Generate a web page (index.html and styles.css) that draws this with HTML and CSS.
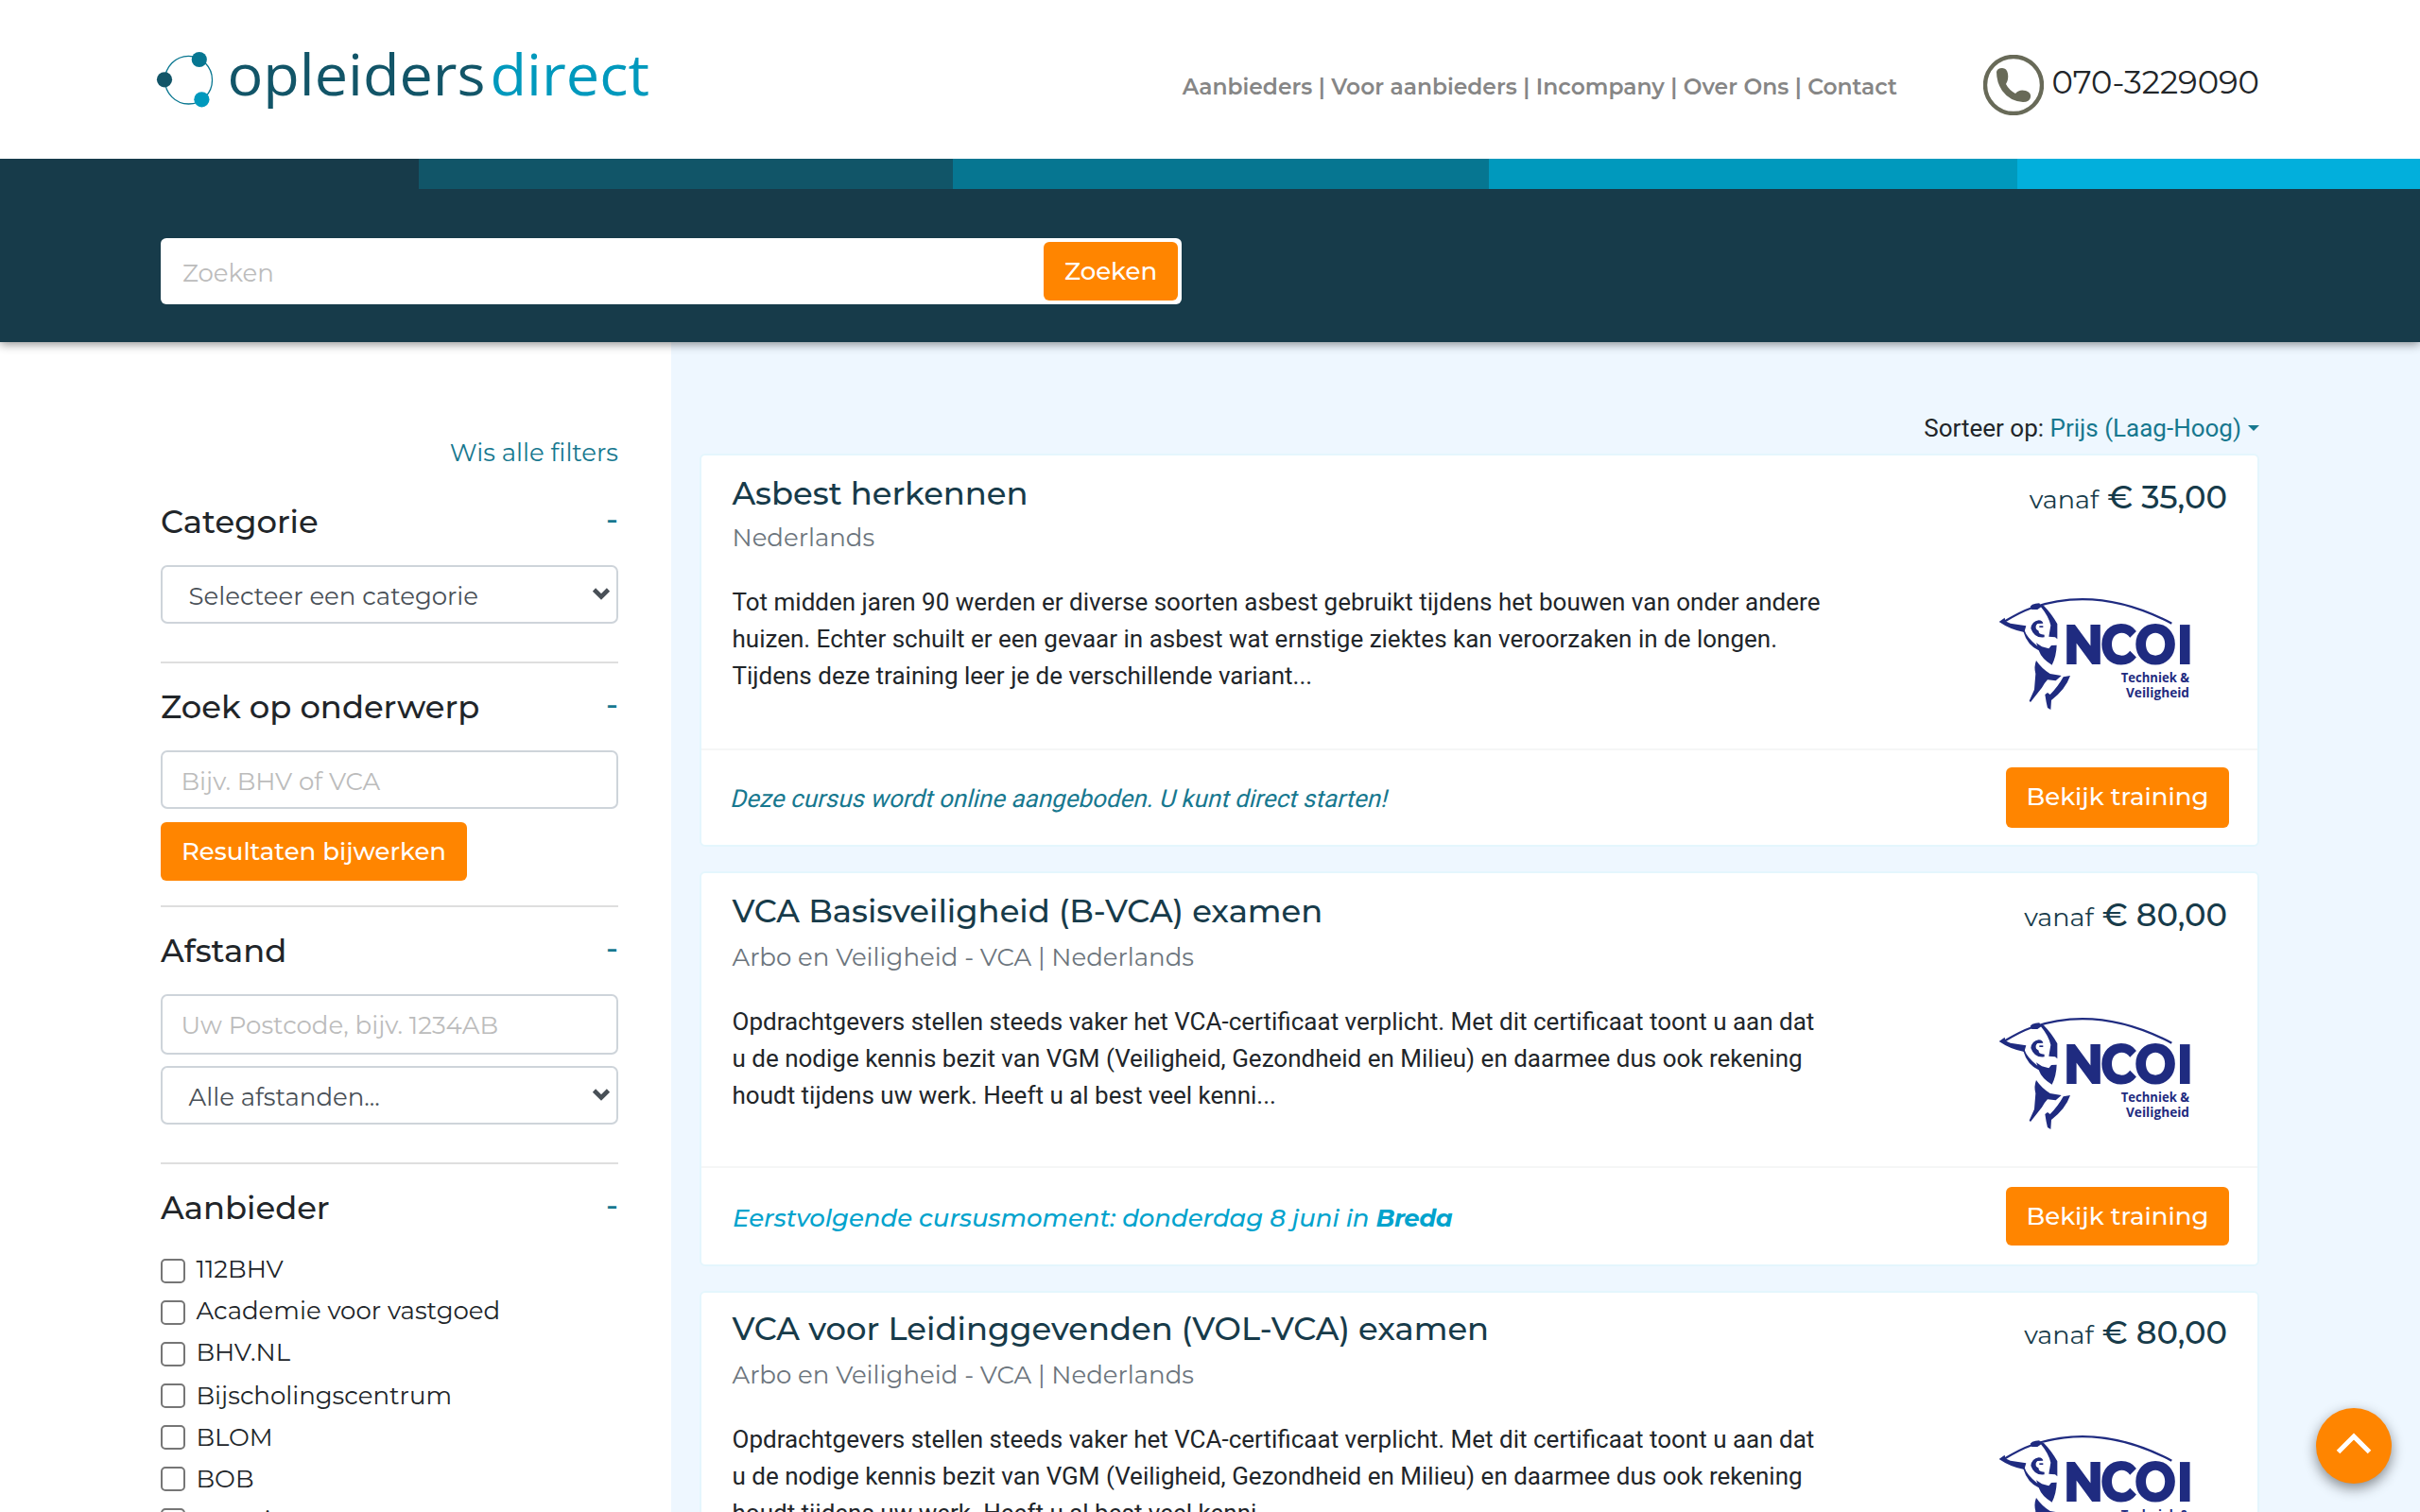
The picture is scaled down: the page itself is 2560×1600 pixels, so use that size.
FILE: index.html
```html
<!DOCTYPE html>
<html lang="nl">
<head>
<meta charset="utf-8">
<title>Opleiders Direct</title>
<link rel="stylesheet" href="styles.css">
</head>
<body>
<svg class="defs" aria-hidden="true">
  <symbol id="ncoi" viewBox="0 0 780 480">
    <g fill="#1f2b80">
      <path d="M118 148 Q170 116 210 102 Q420 30 652 152" fill="none" stroke="#1f2b80" stroke-width="7"/>
      <path d="M104 147 L122 134 L124 145 L140 152 L190 160 L184 180 Q140 172 104 147Z"/>
      <path d="M203 98 Q208 90 220 89 L232 88 L238 100 L226 108 L208 108Z"/>
      <path d="M234 96 L246 96 Q270 120 289 154 L289 202 L282 196 L262 194 L268 158 Q262 130 234 96Z"/>
      <path d="M205 168 Q208 145 230 142 Q242 143 244 152 L226 153 Q218 160 222 170 L230 176 Q228 186 248 188 L248 196 Q216 200 205 168Z"/>
      <path d="M232 160 h12 v5 h-12z"/>
      <path d="M184 172 Q192 198 226 224 L222 214 L240 226 L262 232 L270 222 L287 221 Q286 256 272 284 Q240 266 230 238 Q194 222 181 178Z"/>
      <path d="M222 270 Q240 296 266 312 L302 318 L284 334 L258 331 Q246 344 240 356 L204 402 L200 398 L216 362 L220 312 Q214 290 222 270Z"/>
      <path d="M330 318 L308 322 Q292 352 266 378 L258 372 L250 378 L254 402 L258 420 L268 426 L270 396 Q316 360 330 318Z"/>
      <text x="342 472 592 741" y="282" class="ncoi-name" transform="scale(.9 1)">NCOI</text>
      <text x="491" y="339" class="ncoi-sub" textLength="217" lengthAdjust="spacingAndGlyphs">Techniek &amp;</text>
      <text x="507" y="387" class="ncoi-sub" textLength="201" lengthAdjust="spacingAndGlyphs">Veiligheid</text>
    </g>
  </symbol>
  <symbol id="chevron" viewBox="0 0 20 14"><path d="M2.5 3 L10 10.5 L17.5 3" fill="none" stroke="#495057" stroke-width="4.6"/></symbol>
</svg>

<header class="top">
  <svg class="logo" width="560" height="110" viewBox="140 30 560 110">
    <ellipse cx="199.5" cy="84.7" rx="25" ry="25.3" fill="none" stroke="#087690" stroke-width="1.3"/>
    <circle cx="174" cy="84.3" r="8.1" fill="#125568"/>
    <circle cx="210.8" cy="63" r="8.1" fill="#067691"/>
    <circle cx="213.4" cy="105.3" r="8.1" fill="#0099bd"/>
    <text class="logo-text" x="240.5" y="100.5" textLength="273" lengthAdjust="spacingAndGlyphs" fill="#125568">opleiders</text>
    <text class="logo-text" x="518.5" y="100.5" textLength="168.5" lengthAdjust="spacingAndGlyphs" fill="#0099bd">direct</text>
  </svg>
  <nav class="menu">Aanbieders | Voor aanbieders | Incompany | Over Ons | Contact</nav>
  <div class="phone">
    <svg width="64" height="64" viewBox="0 0 64 64">
      <circle cx="32" cy="32" r="30" fill="none" stroke="#686a58" stroke-width="4.4"/>
      <path d="M14 18 Q15 14 20 14 Q25 14 26 20 Q27 26 24 31 Q27 37 34 41 Q38 36 45 38 Q51 40 50 45 Q49 50 42 50 Q28 49 20 38 Q14 29 14 18Z" fill="#686a58"/>
    </svg>
    <span>070-3229090</span>
  </div>
</header>
<div class="strip"><i></i><i></i><i></i><i></i><i></i></div>
<section class="search">
  <div class="search-box"><span>Zoeken</span><button class="btn">Zoeken</button></div>
</section>

<div class="page">
  <aside class="filters">
    <a class="clear">Wis alle filters</a>
    <section class="group">
      <h5>Categorie<b>-</b></h5>
      <div class="field select">Selecteer een categorie<svg><use href="#chevron"/></svg></div>
    </section>
    <section class="group">
      <h5>Zoek op onderwerp<b>-</b></h5>
      <div class="field hint">Bijv. BHV of VCA</div>
      <button class="btn update">Resultaten bijwerken</button>
    </section>
    <section class="group">
      <h5>Afstand<b>-</b></h5>
      <div class="field hint postcode">Uw Postcode, bijv. 1234AB</div>
      <div class="field select">Alle afstanden...<svg><use href="#chevron"/></svg></div>
    </section>
    <section class="group">
      <h5>Aanbieder<b>-</b></h5>
      <ul>
        <li><i></i><span>112BHV</span></li>
        <li><i></i><span>Academie voor vastgoed</span></li>
        <li><i></i><span>BHV.NL</span></li>
        <li><i></i><span>Bijscholingscentrum</span></li>
        <li><i></i><span>BLOM</span></li>
        <li><i></i><span>BOB</span></li>
        <li><i></i><span>Centric cursussen en examens</span></li>
      </ul>
    </section>
  </aside>

  <main class="results">
    <div class="sort">Sorteer op: <a>Prijs (Laag-Hoog)</a><i class="caret"></i></div>
    <article class="card">
      <div class="card-body">
        <div class="info">
          <h2>Asbest herkennen</h2>
          <p class="meta">Nederlands</p>
          <p class="desc">Tot midden jaren 90 werden er diverse soorten asbest gebruikt tijdens het bouwen van onder andere huizen. Echter schuilt er een gevaar in asbest wat ernstige ziektes kan veroorzaken in de longen. Tijdens deze training leer je de verschillende variant...</p>
        </div>
        <div class="side"><div class="price">vanaf <b>€ 35,00</b></div><svg class="ncoi"><use href="#ncoi"/></svg></div>
      </div>
      <div class="card-foot"><span class="online">Deze cursus wordt online aangeboden. U kunt direct starten!</span><button class="btn">Bekijk training</button></div>
    </article>
    <article class="card tall second">
      <div class="card-body">
        <div class="info">
          <h2>VCA Basisveiligheid (B-VCA) examen</h2>
          <p class="meta">Arbo en Veiligheid - VCA | Nederlands</p>
          <p class="desc">Opdrachtgevers stellen steeds vaker het VCA-certificaat verplicht. Met dit certificaat toont u aan dat u de nodige kennis bezit van VGM (Veiligheid, Gezondheid en Milieu) en daarmee dus ook rekening houdt tijdens uw werk. Heeft u al best veel kenni...</p>
        </div>
        <div class="side"><div class="price">vanaf <b>€ 80,00</b></div><svg class="ncoi"><use href="#ncoi"/></svg></div>
      </div>
      <div class="card-foot"><span class="moment">Eerstvolgende cursusmoment: donderdag 8 juni in <b>Breda</b></span><button class="btn">Bekijk training</button></div>
    </article>
    <article class="card tall third">
      <div class="card-body">
        <div class="info">
          <h2>VCA voor Leidinggevenden (VOL-VCA) examen</h2>
          <p class="meta">Arbo en Veiligheid - VCA | Nederlands</p>
          <p class="desc">Opdrachtgevers stellen steeds vaker het VCA-certificaat verplicht. Met dit certificaat toont u aan dat u de nodige kennis bezit van VGM (Veiligheid, Gezondheid en Milieu) en daarmee dus ook rekening houdt tijdens uw werk. Heeft u al best veel kenni...</p>
        </div>
        <div class="side"><div class="price">vanaf <b>€ 80,00</b></div><svg class="ncoi"><use href="#ncoi"/></svg></div>
      </div>
    </article>
  </main>
</div>
<button class="to-top"><svg width="40" height="26" viewBox="0 0 40 26"><path d="M3.5 21.5 L20 5 L36.5 21.5" fill="none" stroke="#fff" stroke-width="5" stroke-linejoin="miter"/></svg></button>
</body>
</html>
```
FILE: styles.css
```css
* { box-sizing: border-box; }
html, body { height: 1600px; overflow: hidden; }
body { margin: 0; background: #fff; color: #212529; font: 400 26px/39px Montserrat, Inter, sans-serif; }
h2, h5, p, ul { margin: 0; padding: 0; }
a { color: #17788f; }
.defs { position: absolute; width: 0; height: 0; }

.top { height: 168px; padding: 0 170px 0 140px; display: flex; align-items: flex-start; }
.logo { margin-top: 30px; flex: none; }
.logo-text { font: 400 61px "Open Sans", sans-serif; }
.menu { margin: 72px 91px 0 auto; font-weight: 600; font-size: 23.4px; color: #868686; white-space: nowrap; }
.phone { display: flex; width: 292px; justify-content: space-between; margin-top: 58px; }
.phone span { font-size: 33.8px; line-height: 40px; margin-top: 9px; white-space: nowrap; }

.strip { position: relative; z-index: 2; display: grid; grid-template-columns: 443px 565px 567px 559px 426px; height: 32px; }
.strip i:nth-child(1) { background: #173b4a; }
.strip i:nth-child(2) { background: #115568; }
.strip i:nth-child(3) { background: #067691; }
.strip i:nth-child(4) { background: #0099bd; }
.strip i:nth-child(5) { background: #02afdc; }

.search { position: relative; z-index: 1; height: 162px; padding: 52px 170px 0; background: #173b4a; box-shadow: 0 2px 10px rgba(0, 0, 0, .45); }
.search-box { display: flex; justify-content: space-between; width: 1080px; height: 70px; padding: 4px 4px 4px 23px; background: #fff; border-radius: 6px; color: #bcbcbc; }
.search-box span { margin-top: 14px; }
.search-box .btn { width: 142px; }

.btn { height: 62px; padding: 0; border: 0; border-radius: 6px; background: #ff8500; color: #fff; font: 500 26px/39px Montserrat, Inter, sans-serif; white-space: nowrap; }

.page { display: flex; height: 1238px; overflow: hidden; }
.filters { width: 710px; padding: 98px 56px 0 170px; }
.clear { display: block; text-align: right; height: 72px; }
.group:first-of-type h5 { height: 66px; }
.group + .group { border-top: 2px solid #dedede; margin-top: 40px; padding-top: 26px; }
.update { display: block; width: 324px; margin-top: 14px; }
.group:nth-of-type(3) { margin-top: 26px; }
h5 { display: flex; justify-content: space-between; height: 66px; font-weight: 500; font-size: 33.8px; line-height: 40px; }
h5 b { font-weight: 500; line-height: 33px; color: #17788f; }
.field { position: relative; display: flex; height: 62px; padding: 12px 9px 0 19.5px; border: 2px solid #ced4da; border-radius: 7px; color: #495057; }
.hint { color: #bcbcbc; }
.postcode { height: 64px; margin-bottom: 12px; }
.select { justify-content: space-between; padding: 12px 6px 0 27.5px; }
.select svg { width: 20px; height: 14px; margin-top: 9px; }
ul { list-style: none; }
li { display: flex; height: 44px; gap: 11.5px; white-space: nowrap; }
li i { width: 26px; height: 26px; margin-top: 8px; border: 2px solid #767676; border-radius: 5px; }
li:nth-child(n+4) span { padding-top: 2px; }

.results { flex: 1; padding: 72px 170px 0 30px; background: #eef7ff; }
.sort { display: flex; justify-content: flex-end; align-items: flex-start; height: 46px; font-family: Roboto, sans-serif; white-space: pre; }
.caret { margin: 16px 0 0 7px; border: 6px solid transparent; border-top-color: #17788f; border-bottom: 0; }
.card { height: 416px; margin-bottom: 26px; background: #fff; border: 2px solid #e4f6fd; border-radius: 6px; }
.tall { height: 418px; }
.card-body { display: flex; justify-content: space-between; height: 310px; padding: 20px 32px 0; }
.info { width: 1156px; padding-left: .5px; }
h2 { font-weight: 500; font-size: 33.8px; line-height: 40px; color: #173b4a; white-space: nowrap; }
.meta { margin-top: 8px; color: #6c757d; }
.desc { margin-top: 29px; font-family: Roboto, sans-serif; }
.side { display: flex; flex-direction: column; align-items: flex-end; }
.price { color: #173b4a; font-size: 27px; line-height: 40px; margin-top: 4px; white-space: nowrap; }
.price b { font-size: 33.8px; font-weight: 500; margin-left: 2px; }
.ncoi { width: 260px; height: 160px; margin: 60px 16px 0 0; }
.second .meta { margin-top: 10px; }
.second .ncoi { margin-top: 62px; }
.third h2 { margin: -2px 0 2px; }
.third .meta { margin-top: 10px; }
.third .price { margin: 2px 0 2px; }
.ncoi-name { font: 800 178px Montserrat, sans-serif; }
.ncoi-sub { font: 700 43px "Open Sans", sans-serif; }
.card-foot { display: flex; justify-content: space-between; align-items: flex-start; border-top: 2px solid #f5f6f6; padding: 18px 30px 0 32px; }
.card-foot .btn { width: 236px; height: 64px; padding-bottom: 2px; }
.tall .card-foot { padding-top: 20px; }
.tall .card-foot .btn { height: 62px; padding-bottom: 0; }
.online { margin: 14px 0 0 -2px; font-family: Roboto, sans-serif; color: #17788f; transform: skewX(-14deg); transform-origin: 0 28px; }
.moment { margin: 14px 0 0 1px; font-weight: 500; font-style: italic; letter-spacing: -.03px; color: #02a3cd; }
.moment b { font-weight: 700; letter-spacing: -.5px; }

.to-top { position: absolute; left: 2450px; top: 1490px; z-index: 3; width: 80px; height: 80px; padding: 0 0 4px; display: flex; align-items: center; justify-content: center; border: 0; border-radius: 50%; background: #ff8500; box-shadow: 0 5px 14px rgba(0, 0, 0, .45); }
```
